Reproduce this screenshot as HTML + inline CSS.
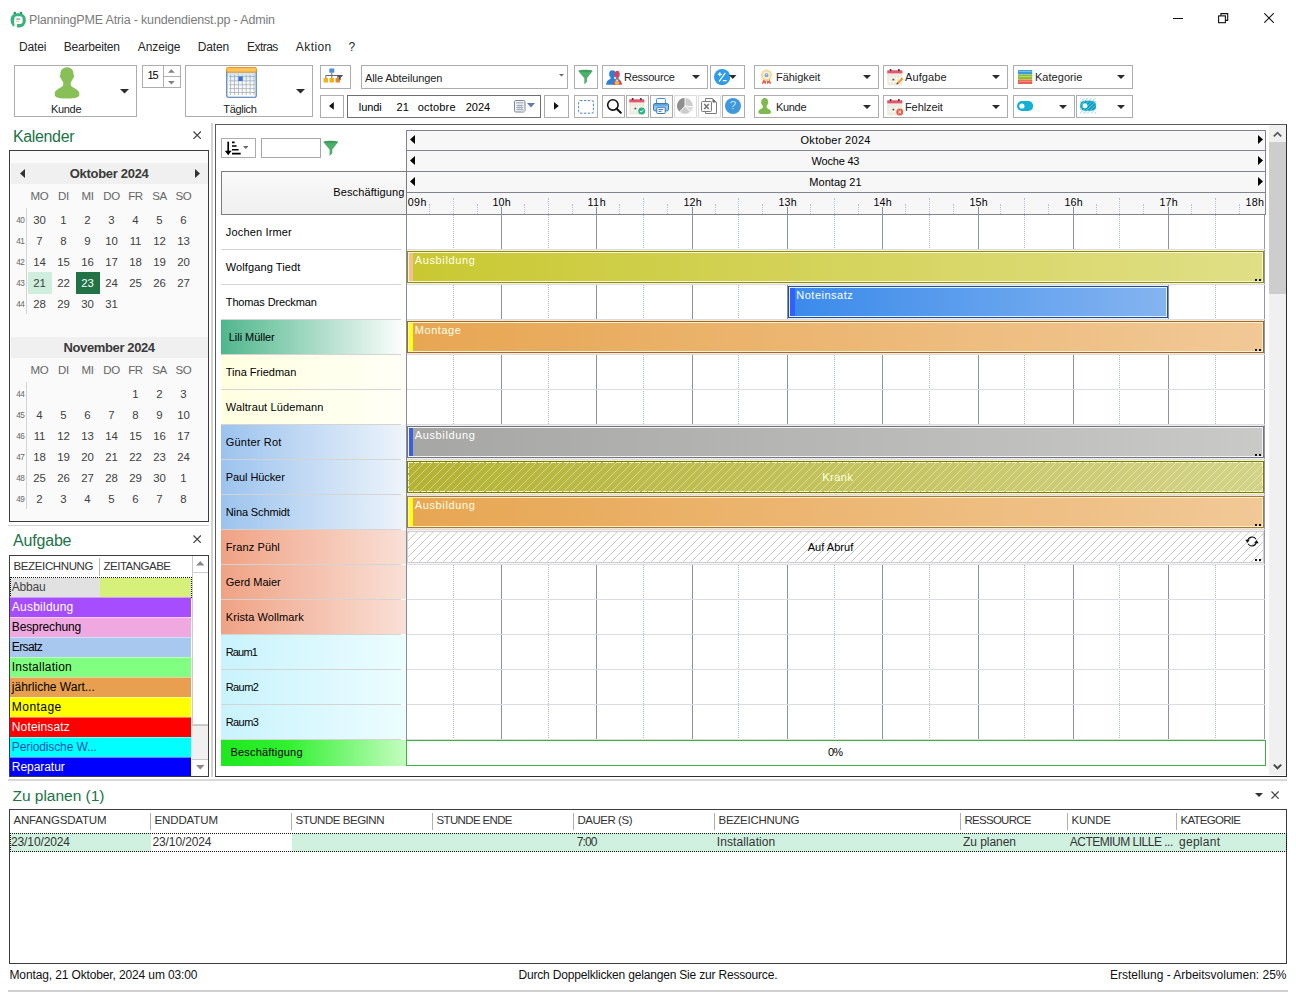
<!DOCTYPE html>
<html lang="de"><head><meta charset="utf-8"><title>PlanningPME Atria - kundendienst.pp - Admin</title>
<style>
html,body{margin:0;padding:0;background:#fff;}
body{width:1296px;height:992px;position:relative;overflow:hidden;font-family:"Liberation Sans",sans-serif;}
.a{position:absolute;box-sizing:border-box;display:block;}
.t{position:absolute;white-space:nowrap;font-family:"Liberation Sans",sans-serif;}
.b{border:1px solid #adadad;background:#fff;}

</style></head><body>
<svg class="a" style="left:10px;top:10.5px;" width="17" height="17" viewBox="0 0 17 17"><rect x="3.600" y="0.700" width="2.400" height="3" rx="1" fill="#2c8f63"/><rect x="9.800" y="0.700" width="2.400" height="3" rx="1" fill="#2c8f63"/>
<rect x="0.600" y="2.200" width="15.200" height="14.200" rx="6.300" fill="#39b37d"/>
<rect x="4.300" y="5.300" width="8.300" height="7.600" rx="2.600" fill="#fff"/><rect x="4.300" y="9" width="2.700" height="8" fill="#fff"/>
<rect x="6.200" y="7.600" width="4" height="1" fill="#3f7fb0"/><rect x="6.200" y="9.900" width="3" height="1" fill="#f2c04a"/></svg>
<span class="t" id="t1" style="top:12.47px;font-size:12.5px;line-height:16px;color:#7b7b7b;letter-spacing:-0.165px;left:29.0px;">PlanningPME Atria - kundendienst.pp - Admin</span>
<div class="a " style="left:1173px;top:17.7px;width:10px;height:1px;background:#111;"></div>
<svg class="a" style="left:1218px;top:12.7px;overflow:visible;" width="10.5" height="10.5" viewBox="0 0 10.5 10.5"><path d="M2.900 2.900V0.600H9.700V7.400H7.400" fill="none" stroke="#111" stroke-width="1.100"/><rect x="0.600" y="2.900" width="6.800" height="6.800" fill="none" stroke="#111" stroke-width="1.100"/></svg>
<svg class="a" style="left:1264px;top:13px;" width="10" height="10" viewBox="0 0 10 10"><path d="M0.300 0.300L9.700 9.700M9.700 0.300L0.300 9.700" stroke="#111" stroke-width="1.100" fill="none"/></svg>
<span class="t" id="t2" style="top:38.64px;font-size:12px;line-height:16px;color:#262626;letter-spacing:-0.179px;left:19.0px;">Datei</span>
<span class="t" id="t3" style="top:38.64px;font-size:12px;line-height:16px;color:#262626;letter-spacing:-0.205px;left:63.8px;">Bearbeiten</span>
<span class="t" id="t4" style="top:38.64px;font-size:12px;line-height:16px;color:#262626;letter-spacing:-0.112px;left:137.8px;">Anzeige</span>
<span class="t" id="t5" style="top:38.64px;font-size:12px;line-height:16px;color:#262626;letter-spacing:-0.133px;left:197.8px;">Daten</span>
<span class="t" id="t6" style="top:38.64px;font-size:12px;line-height:16px;color:#262626;letter-spacing:-0.543px;left:247.0px;">Extras</span>
<span class="t" id="t7" style="top:38.64px;font-size:12px;line-height:16px;color:#262626;letter-spacing:0.428px;left:295.8px;">Aktion</span>
<span class="t" id="t8" style="top:38.64px;font-size:12px;line-height:16px;color:#262626;left:348.5px;">?</span>
<div class="a " style="left:14px;top:65px;width:123px;height:52px;border:1px solid #adadad;background:#fff;"></div>
<svg class="a" style="left:54px;top:67px;" width="26" height="32" viewBox="0 0 26 32"><path d="M13 0.200C17.200 0.200 19.600 3.300 19.600 7.400C19.600 8.200 20.300 8.300 20.300 9.300C20.300 10.400 19.400 10.600 19.200 11C18.300 14 16.300 16 13 16C9.700 16 7.700 14 6.800 11C6.600 10.600 5.700 10.400 5.700 9.300C5.700 8.300 6.400 8.200 6.400 7.400C6.400 3.300 8.800 0.200 13 0.200Z" fill="#88c057"/>
<path d="M9.200 12V17.800C9.200 20.800 1.600 21.300 0.700 26.300C0 30.600 4 31.500 13 31.500C22 31.500 26 30.600 25.300 26.300C24.400 21.300 16.800 20.800 16.800 17.800V12Z" fill="#88c057"/></svg>
<span class="t" id="t9" style="top:101.89px;font-size:11px;line-height:14px;color:#222;letter-spacing:-0.328px;left:51.0px;">Kunde</span>
<svg class="a" style="left:120.0px;top:89.25px;" width="9" height="4.5" viewBox="0 0 9 4.5"><path d="M0 0H9L4.5 4.5Z" fill="#2b2b2b"/></svg>
<div class="a " style="left:142px;top:65px;width:39px;height:23px;border:1px solid #adadad;background:#fff;"></div>
<div class="a " style="left:163px;top:66px;width:1.2px;height:21px;background:#b0b0b0;"></div>
<div class="a " style="left:164px;top:75.8px;width:16px;height:1.2px;background:#b0b0b0;"></div>
<span class="t" id="t10" style="top:68.19px;font-size:11px;line-height:14px;color:#000;letter-spacing:-0.900px;left:147.4px;">15</span>
<svg class="a" style="left:168.2px;top:69px;" width="7" height="4" viewBox="0 0 7 4"><path d="M0 3.700H6.800L3.400 0.200Z" fill="#808080"/></svg>
<svg class="a" style="left:168.2px;top:80.7px;" width="7" height="4" viewBox="0 0 7 4"><path d="M0 0H6.800L3.400 3.500Z" fill="#808080"/></svg>
<div class="a " style="left:185px;top:65px;width:128px;height:52px;border:1px solid #adadad;background:#fff;"></div>
<svg class="a" style="left:225.5px;top:66.5px;" width="31" height="31" viewBox="0 0 31 31"><defs><linearGradient id="cg" x1="0" y1="0" x2="0" y2="1"><stop offset="0" stop-color="#bfe2fb"/><stop offset="0.450" stop-color="#f4faff"/><stop offset="1" stop-color="#ffffff"/></linearGradient></defs>
<rect x="0.800" y="3" width="29.400" height="27.200" rx="1.200" fill="url(#cg)" stroke="#3f73ad" stroke-width="1.100"/>
<rect x="0.600" y="0.600" width="29.800" height="4.600" rx="1.200" fill="#fcc45e" stroke="#e8901c" stroke-width="1"/>
<path d="M4.600 7.500V28M8.500 7.500V28M12.400 7.500V28M16.300 7.500V28M20.200 7.500V28M24.100 7.500V28M28 7.500V28M3 9.500H29M3 13.800H29M3 17.700H29M3 21.600H29M3 25.500H29" stroke="#a9adb3" stroke-width="0.800" fill="none"/>
<rect x="12.400" y="9.500" width="4.300" height="4.500" fill="#3a74d0"/></svg>
<span class="t" id="t11" style="top:101.89px;font-size:11px;line-height:14px;color:#222;letter-spacing:-0.328px;left:223.3px;">Täglich</span>
<svg class="a" style="left:296.0px;top:89.25px;" width="9" height="4.5" viewBox="0 0 9 4.5"><path d="M0 0H9L4.5 4.5Z" fill="#2b2b2b"/></svg>
<div class="a " style="left:320px;top:65px;width:31px;height:24px;border:1px solid #adadad;background:#fff;"></div>
<svg class="a" style="left:323px;top:68px;" width="22" height="17" viewBox="0 0 22 17"><rect x="6.300" y="0.500" width="5" height="4.200" fill="#4a90d9"/>
<path d="M8.800 4.700V7.500M2.800 10V7.500H14.800V10M8.800 7.500V10" stroke="#666" stroke-width="1" fill="none"/>
<rect x="0.500" y="10" width="4.500" height="4.500" fill="#f2b01e"/><rect x="6.500" y="10" width="4.500" height="4.500" fill="#f2b01e"/><rect x="12.500" y="10" width="4.500" height="4.500" fill="#e8862a"/>
<path d="M13.300 7H20.300L17.700 9.800V12.300L15.900 11.200V9.800Z" fill="#555"/></svg>
<div class="a " style="left:361px;top:65px;width:207px;height:24px;border:1px solid #adadad;background:#fff;"></div>
<span class="t" id="t12" style="top:71.19px;font-size:11px;line-height:14px;color:#222;letter-spacing:-0.094px;left:365.0px;">Alle Abteilungen</span>
<svg class="a" style="left:558.8px;top:74.3px;" width="5" height="2.6" viewBox="0 0 5 2.6"><path d="M0 0H5L2.5 2.6Z" fill="#666"/></svg>
<div class="a " style="left:574px;top:65px;width:24px;height:24px;border:1px solid #adadad;background:#fff;"></div>
<svg class="a" style="left:578.3px;top:69px;" width="14.96" height="15.84" viewBox="0 0 17 18"><path d="M0.300 2.200C0.300 0.300 16.700 0.300 16.700 2.200L10.200 10.500V14.500L7.200 17.500V10.500Z" fill="#4daf6b"/><ellipse cx="8.500" cy="2.300" rx="7" ry="1.300" fill="#3f9c5c"/></svg>
<div class="a " style="left:602px;top:65px;width:106px;height:24px;border:1px solid #adadad;background:#fff;"></div>
<svg class="a" style="left:606px;top:69.5px;" width="17" height="15" viewBox="0 0 17 15"><ellipse cx="6.400" cy="4" rx="3.300" ry="3.800" fill="#2f80d2"/><path d="M0.200 14.800C0.200 10.500 3 9.800 4.600 8.800V7H8.200V8.800C9.800 9.800 12.600 10.500 12.600 14.800Z" fill="#2f80d2"/>
<ellipse cx="11.200" cy="4.300" rx="2.500" ry="3.500" fill="#d9405a"/><path d="M7.500 14.800C7.500 11 8.800 9.800 9.800 8.800V7.200H12.600V8.800C13.600 9.800 16 11 16 14.800Z" fill="#d9405a"/>
<circle cx="11" cy="10.800" r="2.200" fill="#3fa6a0"/><path d="M8.800 11.500H13.200V13.500C13.200 14.300 12.500 14.800 11 14.800C9.500 14.800 8.800 14.300 8.800 13.500Z" fill="#f2b84a"/><circle cx="11" cy="10.600" r="1" fill="#e9ded0"/></svg>
<span class="t" id="t13" style="top:70.09px;font-size:11px;line-height:14px;color:#222;letter-spacing:-0.222px;left:624.0px;">Ressource</span>
<svg class="a" style="left:692.3px;top:75.3px;" width="8" height="4" viewBox="0 0 8 4"><path d="M0 0H8L4.0 4Z" fill="#2b2b2b"/></svg>
<div class="a " style="left:710px;top:65px;width:35px;height:24px;border:1px solid #adadad;background:#fff;"></div>
<svg class="a" style="left:713.8px;top:68.7px;" width="16.2" height="16.2" viewBox="0 0 16.200 16.200"><circle cx="8.100" cy="8.100" r="8.100" fill="#2d9be8"/><path d="M3.800 5.300H7.800M5.800 3.300V7.300M11.300 3.800L5 12.600M8.800 11.600H12.600" stroke="#fff" stroke-width="1.200" fill="none"/></svg>
<svg class="a" style="left:729.45px;top:75.4px;" width="7.5" height="4" viewBox="0 0 7.5 4"><path d="M0 0H7.5L3.75 4Z" fill="#2b2b2b"/></svg>
<div class="a " style="left:754px;top:65px;width:125px;height:24px;border:1px solid #adadad;background:#fff;"></div>
<span class="t" id="t14" style="top:70.09px;font-size:11px;line-height:14px;color:#222;letter-spacing:-0.043px;left:776.0px;">Fähigkeit</span>
<svg class="a" style="left:862.8px;top:75.3px;" width="8" height="4" viewBox="0 0 8 4"><path d="M0 0H8L4.0 4Z" fill="#2b2b2b"/></svg>
<svg class="a" style="left:759.5px;top:69px;" width="13" height="16" viewBox="0 0 13 16"><path d="M3.600 9.500L1.800 15.200 4.300 14 5.600 15.600 6.500 10.500Z" fill="#e8604a"/><path d="M9.400 9.500L11.200 15.200 8.700 14 7.400 15.600 6.500 10.500Z" fill="#e8604a"/>
<circle cx="6.500" cy="6.200" r="5.400" fill="#f3d080" stroke="#f7e2a8" stroke-width="1.200" stroke-dasharray="1.700 1.100"/><circle cx="6.500" cy="6.200" r="4" fill="#f1ede1"/><circle cx="6.500" cy="6.200" r="1.900" fill="#7f9fc4"/><circle cx="6.500" cy="5.800" r="0.700" fill="#dfe8f2"/></svg>
<div class="a " style="left:883px;top:65px;width:125px;height:24px;border:1px solid #adadad;background:#fff;"></div>
<span class="t" id="t15" style="top:70.09px;font-size:11px;line-height:14px;color:#222;letter-spacing:0.086px;left:905.0px;">Aufgabe</span>
<svg class="a" style="left:991.8px;top:75.3px;" width="8" height="4" viewBox="0 0 8 4"><path d="M0 0H8L4.0 4Z" fill="#2b2b2b"/></svg>
<svg class="a" style="left:887px;top:68.8px;overflow:visible;" width="17" height="17" viewBox="0 0 17 17"><rect x="0.300" y="1.800" width="15" height="14.600" fill="#ece9dd"/>
<rect x="0.300" y="1.300" width="15" height="3.300" fill="#e0566a"/><rect x="0.300" y="4.600" width="15" height="1.200" fill="#f7e9e4"/>
<circle cx="3.600" cy="1.100" r="1" fill="#2b2b33"/><circle cx="11.900" cy="1.100" r="1" fill="#2b2b33"/>
<path d="M3 7V15.500M6.200 7V15.500M9.400 7V15.500M12.600 7V15.500M1.500 9.300H14M1.500 12.400H14" stroke="#faf8f1" stroke-width="0.900" fill="none"/><rect x="5.500" y="9.700" width="1.700" height="1.700" fill="#55504a"/><path d="M9.300 15.600L10.200 13.200 14.800 8.600 16.300 10.100 11.700 14.700Z" fill="#eea030"/><path d="M9.300 15.600L10.200 13.200 11.700 14.700Z" fill="#5a4630"/><path d="M14.200 9.200L15.700 10.700" stroke="#d98a20" stroke-width="0.800"/></svg>
<div class="a " style="left:1013px;top:65px;width:120px;height:24px;border:1px solid #adadad;background:#fff;"></div>
<span class="t" id="t16" style="top:70.09px;font-size:11px;line-height:14px;color:#222;letter-spacing:0.026px;left:1035.0px;">Kategorie</span>
<svg class="a" style="left:1116.8px;top:75.3px;" width="8" height="4" viewBox="0 0 8 4"><path d="M0 0H8L4.0 4Z" fill="#2b2b2b"/></svg>
<svg class="a" style="left:1018px;top:69.8px;" width="15" height="15" viewBox="0 0 15 15"><rect x="0" y="0" width="14.200" height="4.400" rx="0.500" fill="#3b9ad9"/><rect x="0.800" y="1.200" width="12.600" height="0.800" fill="#8cc8ee"/><rect x="0" y="4.800" width="14.200" height="4.400" rx="0.500" fill="#8cc11f"/><rect x="0.800" y="6" width="12.600" height="0.800" fill="#c4e27a"/><rect x="0" y="9.600" width="14.200" height="4.500" rx="0.500" fill="#e8604a"/><rect x="0.800" y="10.800" width="12.600" height="0.800" fill="#f4a89a"/></svg>
<div class="a " style="left:320px;top:95px;width:24px;height:23px;border:1px solid #adadad;background:#fff;"></div>
<svg class="a" style="left:328.90000000000003px;top:102.0px;" width="4.8" height="7.8" viewBox="0 0 4.8 7.8"><path d="M4.8 0V7.8L0 3.9Z" fill="#111"/></svg>
<div class="a " style="left:347px;top:95px;width:194px;height:23px;border:1px solid #6f6f6f;background:#fff;"></div>
<span class="t" id="t17" style="top:100.19px;font-size:11px;line-height:14px;color:#000;letter-spacing:-0.062px;left:358.8px;">lundi</span>
<span class="t" id="t18" style="top:100.19px;font-size:11px;line-height:14px;color:#000;letter-spacing:0.050px;left:396.5px;">21</span>
<span class="t" id="t19" style="top:100.19px;font-size:11px;line-height:14px;color:#000;letter-spacing:0.183px;left:417.8px;">octobre</span>
<span class="t" id="t20" style="top:100.19px;font-size:11px;line-height:14px;color:#000;letter-spacing:-0.061px;left:465.8px;">2024</span>
<svg class="a" style="left:514px;top:100px;overflow:visible;" width="12" height="13" viewBox="0 0 12 13"><rect x="0.500" y="0.500" width="10.500" height="11.500" rx="1.300" fill="#f1f3f6" stroke="#7d8592" stroke-width="1"/><rect x="2" y="2" width="7.500" height="1.500" fill="#b4bbc6"/><path d="M2.200 5.500H9.300M2.200 7.500H9.300M2.200 9.500H9.300M4.100 4.500V10.500M5.900 4.500V10.500M7.700 4.500V10.500" stroke="#9aa2b0" stroke-width="0.700"/><path d="M7 12L11 8V12Z" fill="#c9ced6"/></svg>
<svg class="a" style="left:526.5px;top:103.05px;" width="8" height="4.5" viewBox="0 0 8 4.5"><path d="M0 0H8L4.0 4.5Z" fill="#5a7cae"/></svg>
<div class="a " style="left:544px;top:95px;width:25px;height:23px;border:1px solid #adadad;background:#fff;"></div>
<svg class="a" style="left:553.9px;top:102.0px;" width="4.8" height="7.8" viewBox="0 0 4.8 7.8"><path d="M0 0V7.8L4.8 3.9Z" fill="#111"/></svg>
<div class="a " style="left:574px;top:95px;width:24px;height:23px;border:1px solid #adadad;background:#fff;"></div>
<svg class="a" style="left:578px;top:99.5px;" width="16" height="14" viewBox="0 0 16 14"><rect x="0.600" y="0.600" width="14.800" height="12.600" rx="1.500" fill="none" stroke="#4f86cc" stroke-width="1" stroke-dasharray="2.400 1.500"/></svg>
<div class="a " style="left:602px;top:95px;width:23px;height:23px;border:1px solid #adadad;background:#fff;"></div>
<svg class="a" style="left:605.5px;top:98.3px;" width="16" height="16" viewBox="0 0 16 16"><circle cx="6.900" cy="6.900" r="5.200" fill="none" stroke="#111" stroke-width="1.600"/><path d="M10.700 10.700L14.800 14.800" stroke="#111" stroke-width="2" stroke-linecap="round"/></svg>
<div class="a " style="left:626px;top:95px;width:23px;height:23px;border:1px solid #adadad;background:#fff;"></div>
<svg class="a" style="left:629px;top:97.6px;overflow:visible;" width="17" height="17" viewBox="0 0 17 17"><rect x="0.300" y="1.800" width="15" height="14.600" fill="#ece9dd"/>
<rect x="0.300" y="1.300" width="15" height="3.300" fill="#e0566a"/><rect x="0.300" y="4.600" width="15" height="1.200" fill="#f7e9e4"/>
<circle cx="3.600" cy="1.100" r="1" fill="#2b2b33"/><circle cx="11.900" cy="1.100" r="1" fill="#2b2b33"/>
<path d="M3 7V15.500M6.200 7V15.500M9.400 7V15.500M12.600 7V15.500M1.500 9.300H14M1.500 12.400H14" stroke="#faf8f1" stroke-width="0.900" fill="none"/><rect x="5.500" y="9.700" width="1.700" height="1.700" fill="#55504a"/><circle cx="12.700" cy="12.900" r="3.500" fill="#27b48a"/><path d="M11 12.900L12.300 14.200 14.500 11.700" stroke="#fff" stroke-width="1" fill="none"/></svg>
<div class="a " style="left:650px;top:95px;width:23px;height:23px;border:1px solid #adadad;background:#fff;"></div>
<svg class="a" style="left:653px;top:98px;" width="16" height="16" viewBox="0 0 16 16"><rect x="3.600" y="0.500" width="8.800" height="6" rx="0.800" fill="#fff" stroke="#4b8bc9" stroke-width="1"/>
<rect x="0.500" y="5.500" width="15" height="7.400" rx="1.600" fill="#8dc9f1" stroke="#3b79b9" stroke-width="1"/><rect x="1" y="6" width="14" height="1.800" fill="#5fa3dc"/>
<rect x="3.800" y="9.300" width="8.400" height="6.200" rx="0.600" fill="#fff" stroke="#3b79b9" stroke-width="1"/><path d="M5.500 11.400H10.300M5.500 13.300H8.600" stroke="#2d5f9a" stroke-width="0.900"/></svg>
<div class="a " style="left:674px;top:95px;width:23px;height:23px;border:1px solid #dcdcdc;background:#fff;"></div>
<svg class="a" style="left:677px;top:98px;" width="16" height="16" viewBox="0 0 16 16"><circle cx="8" cy="8" r="7.900" fill="#cdcdcd"/><path d="M8 8V0.100A7.900 7.900 0 0 0 2.600 13.800Z" fill="#8f8f8f"/><path d="M8 8L15.900 8.600A7.900 7.900 0 0 1 13.400 13.800Z" fill="#dcdcdc"/><path d="M8 8V0M8 8L13.600 14M8 8L2.400 14M8 8L16 8.600" stroke="#fff" stroke-width="0.900"/></svg>
<div class="a " style="left:698px;top:95px;width:23px;height:23px;border:1px solid #dcdcdc;background:#fff;"></div>
<svg class="a" style="left:701px;top:98px;" width="16" height="16" viewBox="0 0 16 16"><path d="M4.500 0.500H11.500L15.500 4.500V15.500H4.500Z" fill="#fff" stroke="#7d7d7d" stroke-width="1"/><path d="M11.500 0.500V4.500H15.500Z" fill="#6a6a6a"/><rect x="0.500" y="3.500" width="10" height="10" rx="0.800" fill="#f7f7f7" stroke="#7d7d7d" stroke-width="1"/><path d="M3.300 6L7.700 11M7.700 6L3.300 11" stroke="#6f6f6f" stroke-width="1.300"/></svg>
<div class="a " style="left:722px;top:95px;width:23px;height:23px;border:1px solid #adadad;background:#fff;"></div>
<svg class="a" style="left:724.9px;top:97.7px;" width="16" height="16" viewBox="0 0 16 16"><circle cx="8" cy="8" r="8" fill="#3f98dc"/></svg>
<div class="t" style="top:98.32px;font-size:11.5px;line-height:15px;color:#cfe6f8;left:433.00px;width:600px;text-align:center;"><span id="t21">?</span></div>
<div class="a " style="left:754px;top:95px;width:125px;height:23px;border:1px solid #adadad;background:#fff;"></div>
<span class="t" id="t22" style="top:100.09px;font-size:11px;line-height:14px;color:#222;letter-spacing:-0.328px;left:776.0px;">Kunde</span>
<svg class="a" style="left:862.8px;top:104.8px;" width="8" height="4" viewBox="0 0 8 4"><path d="M0 0H8L4.0 4Z" fill="#2b2b2b"/></svg>
<svg class="a" style="left:757.8px;top:97.8px;" width="13.4" height="16.5" viewBox="0 0 26 32"><path d="M13 0.200C17.200 0.200 19.600 3.300 19.600 7.400C19.600 8.200 20.300 8.300 20.300 9.300C20.300 10.400 19.400 10.600 19.200 11C18.300 14 16.300 16 13 16C9.700 16 7.700 14 6.800 11C6.600 10.600 5.700 10.400 5.700 9.300C5.700 8.300 6.400 8.200 6.400 7.400C6.400 3.300 8.800 0.200 13 0.200Z" fill="#7fba4e"/>
<path d="M9.200 12V17.800C9.200 20.800 1.600 21.300 0.700 26.300C0 30.600 4 31.500 13 31.500C22 31.500 26 30.600 25.300 26.300C24.400 21.300 16.800 20.800 16.800 17.800V12Z" fill="#7fba4e"/></svg>
<div class="a " style="left:883px;top:95px;width:125px;height:23px;border:1px solid #adadad;background:#fff;"></div>
<span class="t" id="t23" style="top:100.09px;font-size:11px;line-height:14px;color:#222;letter-spacing:-0.104px;left:905.0px;">Fehlzeit</span>
<svg class="a" style="left:991.8px;top:104.8px;" width="8" height="4" viewBox="0 0 8 4"><path d="M0 0H8L4.0 4Z" fill="#2b2b2b"/></svg>
<svg class="a" style="left:887px;top:98.8px;overflow:visible;" width="17" height="17" viewBox="0 0 17 17"><rect x="0.300" y="1.800" width="15" height="14.600" fill="#ece9dd"/>
<rect x="0.300" y="1.300" width="15" height="3.300" fill="#e0566a"/><rect x="0.300" y="4.600" width="15" height="1.200" fill="#f7e9e4"/>
<circle cx="3.600" cy="1.100" r="1" fill="#2b2b33"/><circle cx="11.900" cy="1.100" r="1" fill="#2b2b33"/>
<path d="M3 7V15.500M6.200 7V15.500M9.400 7V15.500M12.600 7V15.500M1.500 9.300H14M1.500 12.400H14" stroke="#faf8f1" stroke-width="0.900" fill="none"/><rect x="5.500" y="9.700" width="1.700" height="1.700" fill="#55504a"/><circle cx="12.700" cy="12.900" r="3.500" fill="#e8604e"/><path d="M11.400 11.600L14 14.200M14 11.600L11.400 14.200" stroke="#fff" stroke-width="1"/></svg>
<div class="a " style="left:1013px;top:95px;width:62px;height:23px;border:1px solid #adadad;background:#fff;"></div>
<svg class="a" style="left:1059.0px;top:104.8px;" width="8" height="4" viewBox="0 0 8 4"><path d="M0 0H8L4.0 4Z" fill="#2b2b2b"/></svg>
<svg class="a" style="left:1017px;top:100.9px;" width="16.5" height="10" viewBox="0 0 16.5 10"><rect x="0" y="0" width="16.200" height="10" rx="5" fill="#12b0d4"/><circle cx="4.900" cy="5" r="2.600" fill="#fff"/></svg>
<div class="a " style="left:1076px;top:95px;width:57px;height:23px;border:1px solid #adadad;background:#fff;"></div>
<svg class="a" style="left:1116.8px;top:104.8px;" width="8" height="4" viewBox="0 0 8 4"><path d="M0 0H8L4.0 4Z" fill="#2b2b2b"/></svg>
<svg class="a" style="left:1079.8px;top:98.2px;" width="16.5" height="15.5" viewBox="0 0 16.5 15.5"><defs><pattern id="hx" width="2.600" height="2.600" patternUnits="userSpaceOnUse" patternTransform="rotate(45)"><rect width="1" height="2.600" fill="#a9dcea"/></pattern>
<pattern id="hy" width="2.600" height="2.600" patternUnits="userSpaceOnUse" patternTransform="rotate(45)"><rect width="0.800" height="2.600" fill="#5cc8e2"/></pattern></defs>
<rect x="0" y="0" width="16.200" height="15.500" fill="url(#hx)"/><rect x="0" y="2.700" width="16.200" height="10" rx="5" fill="#0b9dbd"/><rect x="0" y="2.700" width="16.200" height="10" rx="5" fill="url(#hy)"/><circle cx="5" cy="7.700" r="2.500" fill="#e8f7fb"/></svg>
<span class="t" id="t24" style="top:125.96px;font-size:16px;line-height:21px;color:#217346;letter-spacing:-0.364px;left:13.0px;">Kalender</span>
<svg class="a" style="left:192.9px;top:131.10000000000002px;" width="8.4" height="8.4" viewBox="0 0 8.4 8.4"><path d="M0.500 0.500L7.9 7.9M7.9 0.500L0.500 7.9" stroke="#444" stroke-width="1.2" fill="none"/></svg>
<div class="a " style="left:9px;top:150px;width:199.5px;height:371.5px;border:1px solid #3c3c3c;border-width:1.5px 1px 1.5px 1.5px;background:#fafafa;"></div>
<div class="a " style="left:11px;top:163px;width:196.5px;height:21px;background:#f0f0f0;"></div>
<div class="t" style="top:165.00px;font-size:13px;line-height:17px;color:#3a3a3a;font-weight:700;letter-spacing:-0.307px;left:-190.85px;width:600px;text-align:center;"><span id="t25">Oktober 2024</span></div>
<svg class="a" style="left:19.5px;top:169.0px;" width="5" height="9" viewBox="0 0 5 9"><path d="M5 0V9L0 4.5Z" fill="#333"/></svg>
<svg class="a" style="left:194.5px;top:169.0px;" width="5" height="9" viewBox="0 0 5 9"><path d="M0 0V9L5 4.5Z" fill="#333"/></svg>
<div class="t" style="top:188.52px;font-size:11.5px;line-height:15px;color:#666;left:-260.50px;width:600px;text-align:center;letter-spacing:-0.300px;"><span id="t26">MO</span></div>
<div class="t" style="top:188.52px;font-size:11.5px;line-height:15px;color:#666;left:-236.50px;width:600px;text-align:center;letter-spacing:-0.300px;"><span id="t27">DI</span></div>
<div class="t" style="top:188.52px;font-size:11.5px;line-height:15px;color:#666;left:-212.50px;width:600px;text-align:center;letter-spacing:-0.300px;"><span id="t28">MI</span></div>
<div class="t" style="top:188.52px;font-size:11.5px;line-height:15px;color:#666;left:-188.50px;width:600px;text-align:center;letter-spacing:-0.300px;"><span id="t29">DO</span></div>
<div class="t" style="top:188.52px;font-size:11.5px;line-height:15px;color:#666;left:-164.50px;width:600px;text-align:center;letter-spacing:-0.300px;"><span id="t30">FR</span></div>
<div class="t" style="top:188.52px;font-size:11.5px;line-height:15px;color:#666;left:-140.50px;width:600px;text-align:center;letter-spacing:-0.300px;"><span id="t31">SA</span></div>
<div class="t" style="top:188.52px;font-size:11.5px;line-height:15px;color:#666;left:-116.50px;width:600px;text-align:center;letter-spacing:-0.300px;"><span id="t32">SO</span></div>
<div class="a " style="left:26px;top:207.5px;width:1px;height:106px;background:#d4d4d4;"></div>
<div class="t" style="top:214.56px;font-size:8.2px;line-height:11px;color:#666;left:-279.80px;width:600px;text-align:center;letter-spacing:-0.700px;"><span id="t33">40</span></div>
<div class="t" style="top:212.65px;font-size:11.4px;line-height:15px;color:#404040;left:-260.60px;width:600px;text-align:center;letter-spacing:-0.250px;"><span id="t34">30</span></div>
<div class="t" style="top:212.65px;font-size:11.4px;line-height:15px;color:#404040;left:-236.60px;width:600px;text-align:center;letter-spacing:-0.250px;"><span id="t35">1</span></div>
<div class="t" style="top:212.65px;font-size:11.4px;line-height:15px;color:#404040;left:-212.60px;width:600px;text-align:center;letter-spacing:-0.250px;"><span id="t36">2</span></div>
<div class="t" style="top:212.65px;font-size:11.4px;line-height:15px;color:#404040;left:-188.60px;width:600px;text-align:center;letter-spacing:-0.250px;"><span id="t37">3</span></div>
<div class="t" style="top:212.65px;font-size:11.4px;line-height:15px;color:#404040;left:-164.60px;width:600px;text-align:center;letter-spacing:-0.250px;"><span id="t38">4</span></div>
<div class="t" style="top:212.65px;font-size:11.4px;line-height:15px;color:#404040;left:-140.60px;width:600px;text-align:center;letter-spacing:-0.250px;"><span id="t39">5</span></div>
<div class="t" style="top:212.65px;font-size:11.4px;line-height:15px;color:#404040;left:-116.60px;width:600px;text-align:center;letter-spacing:-0.250px;"><span id="t40">6</span></div>
<div class="t" style="top:235.56px;font-size:8.2px;line-height:11px;color:#666;left:-279.80px;width:600px;text-align:center;letter-spacing:-0.700px;"><span id="t41">41</span></div>
<div class="t" style="top:233.65px;font-size:11.4px;line-height:15px;color:#404040;left:-260.60px;width:600px;text-align:center;letter-spacing:-0.250px;"><span id="t42">7</span></div>
<div class="t" style="top:233.65px;font-size:11.4px;line-height:15px;color:#404040;left:-236.60px;width:600px;text-align:center;letter-spacing:-0.250px;"><span id="t43">8</span></div>
<div class="t" style="top:233.65px;font-size:11.4px;line-height:15px;color:#404040;left:-212.60px;width:600px;text-align:center;letter-spacing:-0.250px;"><span id="t44">9</span></div>
<div class="t" style="top:233.65px;font-size:11.4px;line-height:15px;color:#404040;left:-188.60px;width:600px;text-align:center;letter-spacing:-0.250px;"><span id="t45">10</span></div>
<div class="t" style="top:233.65px;font-size:11.4px;line-height:15px;color:#404040;left:-164.60px;width:600px;text-align:center;letter-spacing:-0.250px;"><span id="t46">11</span></div>
<div class="t" style="top:233.65px;font-size:11.4px;line-height:15px;color:#404040;left:-140.60px;width:600px;text-align:center;letter-spacing:-0.250px;"><span id="t47">12</span></div>
<div class="t" style="top:233.65px;font-size:11.4px;line-height:15px;color:#404040;left:-116.60px;width:600px;text-align:center;letter-spacing:-0.250px;"><span id="t48">13</span></div>
<div class="t" style="top:256.56px;font-size:8.2px;line-height:11px;color:#666;left:-279.80px;width:600px;text-align:center;letter-spacing:-0.700px;"><span id="t49">42</span></div>
<div class="t" style="top:254.65px;font-size:11.4px;line-height:15px;color:#404040;left:-260.60px;width:600px;text-align:center;letter-spacing:-0.250px;"><span id="t50">14</span></div>
<div class="t" style="top:254.65px;font-size:11.4px;line-height:15px;color:#404040;left:-236.60px;width:600px;text-align:center;letter-spacing:-0.250px;"><span id="t51">15</span></div>
<div class="t" style="top:254.65px;font-size:11.4px;line-height:15px;color:#404040;left:-212.60px;width:600px;text-align:center;letter-spacing:-0.250px;"><span id="t52">16</span></div>
<div class="t" style="top:254.65px;font-size:11.4px;line-height:15px;color:#404040;left:-188.60px;width:600px;text-align:center;letter-spacing:-0.250px;"><span id="t53">17</span></div>
<div class="t" style="top:254.65px;font-size:11.4px;line-height:15px;color:#404040;left:-164.60px;width:600px;text-align:center;letter-spacing:-0.250px;"><span id="t54">18</span></div>
<div class="t" style="top:254.65px;font-size:11.4px;line-height:15px;color:#404040;left:-140.60px;width:600px;text-align:center;letter-spacing:-0.250px;"><span id="t55">19</span></div>
<div class="t" style="top:254.65px;font-size:11.4px;line-height:15px;color:#404040;left:-116.60px;width:600px;text-align:center;letter-spacing:-0.250px;"><span id="t56">20</span></div>
<div class="t" style="top:277.56px;font-size:8.2px;line-height:11px;color:#666;left:-279.80px;width:600px;text-align:center;letter-spacing:-0.700px;"><span id="t57">43</span></div>
<div class="a " style="left:28.0px;top:272px;width:24px;height:21.5px;background:#cfeedd;"></div>
<div class="t" style="top:275.65px;font-size:11.4px;line-height:15px;color:#404040;left:-260.60px;width:600px;text-align:center;letter-spacing:-0.250px;"><span id="t58">21</span></div>
<div class="t" style="top:275.65px;font-size:11.4px;line-height:15px;color:#404040;left:-236.60px;width:600px;text-align:center;letter-spacing:-0.250px;"><span id="t59">22</span></div>
<div class="a " style="left:76.0px;top:272px;width:24px;height:21.5px;background:#217346;"></div>
<div class="t" style="top:275.65px;font-size:11.4px;line-height:15px;color:#fff;left:-212.60px;width:600px;text-align:center;letter-spacing:-0.250px;"><span id="t60">23</span></div>
<div class="t" style="top:275.65px;font-size:11.4px;line-height:15px;color:#404040;left:-188.60px;width:600px;text-align:center;letter-spacing:-0.250px;"><span id="t61">24</span></div>
<div class="t" style="top:275.65px;font-size:11.4px;line-height:15px;color:#404040;left:-164.60px;width:600px;text-align:center;letter-spacing:-0.250px;"><span id="t62">25</span></div>
<div class="t" style="top:275.65px;font-size:11.4px;line-height:15px;color:#404040;left:-140.60px;width:600px;text-align:center;letter-spacing:-0.250px;"><span id="t63">26</span></div>
<div class="t" style="top:275.65px;font-size:11.4px;line-height:15px;color:#404040;left:-116.60px;width:600px;text-align:center;letter-spacing:-0.250px;"><span id="t64">27</span></div>
<div class="t" style="top:298.56px;font-size:8.2px;line-height:11px;color:#666;left:-279.80px;width:600px;text-align:center;letter-spacing:-0.700px;"><span id="t65">44</span></div>
<div class="t" style="top:296.65px;font-size:11.4px;line-height:15px;color:#404040;left:-260.60px;width:600px;text-align:center;letter-spacing:-0.250px;"><span id="t66">28</span></div>
<div class="t" style="top:296.65px;font-size:11.4px;line-height:15px;color:#404040;left:-236.60px;width:600px;text-align:center;letter-spacing:-0.250px;"><span id="t67">29</span></div>
<div class="t" style="top:296.65px;font-size:11.4px;line-height:15px;color:#404040;left:-212.60px;width:600px;text-align:center;letter-spacing:-0.250px;"><span id="t68">30</span></div>
<div class="t" style="top:296.65px;font-size:11.4px;line-height:15px;color:#404040;left:-188.60px;width:600px;text-align:center;letter-spacing:-0.250px;"><span id="t69">31</span></div>
<div class="a " style="left:11px;top:337px;width:196.5px;height:21px;background:#f0f0f0;"></div>
<div class="t" style="top:339.00px;font-size:13px;line-height:17px;color:#3a3a3a;font-weight:700;letter-spacing:-0.385px;left:-190.89px;width:600px;text-align:center;"><span id="t70">November 2024</span></div>
<div class="t" style="top:362.52px;font-size:11.5px;line-height:15px;color:#666;left:-260.50px;width:600px;text-align:center;letter-spacing:-0.300px;"><span id="t71">MO</span></div>
<div class="t" style="top:362.52px;font-size:11.5px;line-height:15px;color:#666;left:-236.50px;width:600px;text-align:center;letter-spacing:-0.300px;"><span id="t72">DI</span></div>
<div class="t" style="top:362.52px;font-size:11.5px;line-height:15px;color:#666;left:-212.50px;width:600px;text-align:center;letter-spacing:-0.300px;"><span id="t73">MI</span></div>
<div class="t" style="top:362.52px;font-size:11.5px;line-height:15px;color:#666;left:-188.50px;width:600px;text-align:center;letter-spacing:-0.300px;"><span id="t74">DO</span></div>
<div class="t" style="top:362.52px;font-size:11.5px;line-height:15px;color:#666;left:-164.50px;width:600px;text-align:center;letter-spacing:-0.300px;"><span id="t75">FR</span></div>
<div class="t" style="top:362.52px;font-size:11.5px;line-height:15px;color:#666;left:-140.50px;width:600px;text-align:center;letter-spacing:-0.300px;"><span id="t76">SA</span></div>
<div class="t" style="top:362.52px;font-size:11.5px;line-height:15px;color:#666;left:-116.50px;width:600px;text-align:center;letter-spacing:-0.300px;"><span id="t77">SO</span></div>
<div class="a " style="left:26px;top:381.5px;width:1px;height:127px;background:#d4d4d4;"></div>
<div class="t" style="top:388.56px;font-size:8.2px;line-height:11px;color:#666;left:-279.80px;width:600px;text-align:center;letter-spacing:-0.700px;"><span id="t78">44</span></div>
<div class="t" style="top:386.65px;font-size:11.4px;line-height:15px;color:#404040;left:-164.60px;width:600px;text-align:center;letter-spacing:-0.250px;"><span id="t79">1</span></div>
<div class="t" style="top:386.65px;font-size:11.4px;line-height:15px;color:#404040;left:-140.60px;width:600px;text-align:center;letter-spacing:-0.250px;"><span id="t80">2</span></div>
<div class="t" style="top:386.65px;font-size:11.4px;line-height:15px;color:#404040;left:-116.60px;width:600px;text-align:center;letter-spacing:-0.250px;"><span id="t81">3</span></div>
<div class="t" style="top:409.56px;font-size:8.2px;line-height:11px;color:#666;left:-279.80px;width:600px;text-align:center;letter-spacing:-0.700px;"><span id="t82">45</span></div>
<div class="t" style="top:407.65px;font-size:11.4px;line-height:15px;color:#404040;left:-260.60px;width:600px;text-align:center;letter-spacing:-0.250px;"><span id="t83">4</span></div>
<div class="t" style="top:407.65px;font-size:11.4px;line-height:15px;color:#404040;left:-236.60px;width:600px;text-align:center;letter-spacing:-0.250px;"><span id="t84">5</span></div>
<div class="t" style="top:407.65px;font-size:11.4px;line-height:15px;color:#404040;left:-212.60px;width:600px;text-align:center;letter-spacing:-0.250px;"><span id="t85">6</span></div>
<div class="t" style="top:407.65px;font-size:11.4px;line-height:15px;color:#404040;left:-188.60px;width:600px;text-align:center;letter-spacing:-0.250px;"><span id="t86">7</span></div>
<div class="t" style="top:407.65px;font-size:11.4px;line-height:15px;color:#404040;left:-164.60px;width:600px;text-align:center;letter-spacing:-0.250px;"><span id="t87">8</span></div>
<div class="t" style="top:407.65px;font-size:11.4px;line-height:15px;color:#404040;left:-140.60px;width:600px;text-align:center;letter-spacing:-0.250px;"><span id="t88">9</span></div>
<div class="t" style="top:407.65px;font-size:11.4px;line-height:15px;color:#404040;left:-116.60px;width:600px;text-align:center;letter-spacing:-0.250px;"><span id="t89">10</span></div>
<div class="t" style="top:430.56px;font-size:8.2px;line-height:11px;color:#666;left:-279.80px;width:600px;text-align:center;letter-spacing:-0.700px;"><span id="t90">46</span></div>
<div class="t" style="top:428.65px;font-size:11.4px;line-height:15px;color:#404040;left:-260.60px;width:600px;text-align:center;letter-spacing:-0.250px;"><span id="t91">11</span></div>
<div class="t" style="top:428.65px;font-size:11.4px;line-height:15px;color:#404040;left:-236.60px;width:600px;text-align:center;letter-spacing:-0.250px;"><span id="t92">12</span></div>
<div class="t" style="top:428.65px;font-size:11.4px;line-height:15px;color:#404040;left:-212.60px;width:600px;text-align:center;letter-spacing:-0.250px;"><span id="t93">13</span></div>
<div class="t" style="top:428.65px;font-size:11.4px;line-height:15px;color:#404040;left:-188.60px;width:600px;text-align:center;letter-spacing:-0.250px;"><span id="t94">14</span></div>
<div class="t" style="top:428.65px;font-size:11.4px;line-height:15px;color:#404040;left:-164.60px;width:600px;text-align:center;letter-spacing:-0.250px;"><span id="t95">15</span></div>
<div class="t" style="top:428.65px;font-size:11.4px;line-height:15px;color:#404040;left:-140.60px;width:600px;text-align:center;letter-spacing:-0.250px;"><span id="t96">16</span></div>
<div class="t" style="top:428.65px;font-size:11.4px;line-height:15px;color:#404040;left:-116.60px;width:600px;text-align:center;letter-spacing:-0.250px;"><span id="t97">17</span></div>
<div class="t" style="top:451.56px;font-size:8.2px;line-height:11px;color:#666;left:-279.80px;width:600px;text-align:center;letter-spacing:-0.700px;"><span id="t98">47</span></div>
<div class="t" style="top:449.65px;font-size:11.4px;line-height:15px;color:#404040;left:-260.60px;width:600px;text-align:center;letter-spacing:-0.250px;"><span id="t99">18</span></div>
<div class="t" style="top:449.65px;font-size:11.4px;line-height:15px;color:#404040;left:-236.60px;width:600px;text-align:center;letter-spacing:-0.250px;"><span id="t100">19</span></div>
<div class="t" style="top:449.65px;font-size:11.4px;line-height:15px;color:#404040;left:-212.60px;width:600px;text-align:center;letter-spacing:-0.250px;"><span id="t101">20</span></div>
<div class="t" style="top:449.65px;font-size:11.4px;line-height:15px;color:#404040;left:-188.60px;width:600px;text-align:center;letter-spacing:-0.250px;"><span id="t102">21</span></div>
<div class="t" style="top:449.65px;font-size:11.4px;line-height:15px;color:#404040;left:-164.60px;width:600px;text-align:center;letter-spacing:-0.250px;"><span id="t103">22</span></div>
<div class="t" style="top:449.65px;font-size:11.4px;line-height:15px;color:#404040;left:-140.60px;width:600px;text-align:center;letter-spacing:-0.250px;"><span id="t104">23</span></div>
<div class="t" style="top:449.65px;font-size:11.4px;line-height:15px;color:#404040;left:-116.60px;width:600px;text-align:center;letter-spacing:-0.250px;"><span id="t105">24</span></div>
<div class="t" style="top:472.56px;font-size:8.2px;line-height:11px;color:#666;left:-279.80px;width:600px;text-align:center;letter-spacing:-0.700px;"><span id="t106">48</span></div>
<div class="t" style="top:470.65px;font-size:11.4px;line-height:15px;color:#404040;left:-260.60px;width:600px;text-align:center;letter-spacing:-0.250px;"><span id="t107">25</span></div>
<div class="t" style="top:470.65px;font-size:11.4px;line-height:15px;color:#404040;left:-236.60px;width:600px;text-align:center;letter-spacing:-0.250px;"><span id="t108">26</span></div>
<div class="t" style="top:470.65px;font-size:11.4px;line-height:15px;color:#404040;left:-212.60px;width:600px;text-align:center;letter-spacing:-0.250px;"><span id="t109">27</span></div>
<div class="t" style="top:470.65px;font-size:11.4px;line-height:15px;color:#404040;left:-188.60px;width:600px;text-align:center;letter-spacing:-0.250px;"><span id="t110">28</span></div>
<div class="t" style="top:470.65px;font-size:11.4px;line-height:15px;color:#404040;left:-164.60px;width:600px;text-align:center;letter-spacing:-0.250px;"><span id="t111">29</span></div>
<div class="t" style="top:470.65px;font-size:11.4px;line-height:15px;color:#404040;left:-140.60px;width:600px;text-align:center;letter-spacing:-0.250px;"><span id="t112">30</span></div>
<div class="t" style="top:470.65px;font-size:11.4px;line-height:15px;color:#404040;left:-116.60px;width:600px;text-align:center;letter-spacing:-0.250px;"><span id="t113">1</span></div>
<div class="t" style="top:493.56px;font-size:8.2px;line-height:11px;color:#666;left:-279.80px;width:600px;text-align:center;letter-spacing:-0.700px;"><span id="t114">49</span></div>
<div class="t" style="top:491.65px;font-size:11.4px;line-height:15px;color:#404040;left:-260.60px;width:600px;text-align:center;letter-spacing:-0.250px;"><span id="t115">2</span></div>
<div class="t" style="top:491.65px;font-size:11.4px;line-height:15px;color:#404040;left:-236.60px;width:600px;text-align:center;letter-spacing:-0.250px;"><span id="t116">3</span></div>
<div class="t" style="top:491.65px;font-size:11.4px;line-height:15px;color:#404040;left:-212.60px;width:600px;text-align:center;letter-spacing:-0.250px;"><span id="t117">4</span></div>
<div class="t" style="top:491.65px;font-size:11.4px;line-height:15px;color:#404040;left:-188.60px;width:600px;text-align:center;letter-spacing:-0.250px;"><span id="t118">5</span></div>
<div class="t" style="top:491.65px;font-size:11.4px;line-height:15px;color:#404040;left:-164.60px;width:600px;text-align:center;letter-spacing:-0.250px;"><span id="t119">6</span></div>
<div class="t" style="top:491.65px;font-size:11.4px;line-height:15px;color:#404040;left:-140.60px;width:600px;text-align:center;letter-spacing:-0.250px;"><span id="t120">7</span></div>
<div class="t" style="top:491.65px;font-size:11.4px;line-height:15px;color:#404040;left:-116.60px;width:600px;text-align:center;letter-spacing:-0.250px;"><span id="t121">8</span></div>
<div class="a " style="left:8px;top:524.5px;width:201px;height:1.5px;background:#d2d2d2;"></div>
<div class="a " style="left:211px;top:123px;width:2px;height:654px;background:#d3d3d3;"></div>
<span class="t" id="t122" style="top:529.76px;font-size:16px;line-height:21px;color:#217346;letter-spacing:-0.185px;left:13.0px;">Aufgabe</span>
<svg class="a" style="left:192.9px;top:535.0999999999999px;" width="8.4" height="8.4" viewBox="0 0 8.4 8.4"><path d="M0.500 0.500L7.9 7.9M7.9 0.500L0.500 7.9" stroke="#444" stroke-width="1.2" fill="none"/></svg>
<div class="a " style="left:9px;top:554.5px;width:200px;height:222.5px;border:1.5px solid #3c3c3c;border-right-width:1px;background:#fff;"></div>
<span class="t" id="t123" style="top:558.52px;font-size:11.5px;line-height:15px;color:#333;letter-spacing:-0.370px;left:13.5px;">BEZEICHNUNG</span>
<div class="a " style="left:99px;top:558px;width:1px;height:17.5px;background:#b8b8b8;"></div>
<span class="t" id="t124" style="top:558.52px;font-size:11.5px;line-height:15px;color:#333;letter-spacing:-0.500px;left:103.5px;">ZEITANGABE</span>
<div class="a " style="left:191.5px;top:556px;width:16.5px;height:220px;background:#fff;"></div>
<div class="a " style="left:191.5px;top:556px;width:16.5px;height:16.5px;background:#fff;border:1px solid #c9c9c9;border-top:none;border-right:none;"></div>
<svg class="a" style="left:195.75px;top:561.25px;" width="8.5" height="4.5" viewBox="0 0 8.5 4.5"><path d="M0 4.5H8.5L4.25 0Z" fill="#8a8a8a"/></svg>
<div class="a " style="left:191.5px;top:572px;width:16.5px;height:153px;border:1px solid #cdcdcd;border-right:none;background:#fff;"></div>
<div class="a " style="left:191.5px;top:724.5px;width:16.5px;height:35px;background:#f0f0f0;border-top:1px solid #c9c9c9;border-bottom:1px solid #c9c9c9;"></div>
<svg class="a" style="left:195.75px;top:765.25px;" width="8.5" height="4.5" viewBox="0 0 8.5 4.5"><path d="M0 0H8.5L4.25 4.5Z" fill="#8a8a8a"/></svg>
<div class="a " style="left:10px;top:577.5px;width:89.5px;height:20px;background:#e1e1e1;"></div>
<div class="a " style="left:99.5px;top:577.5px;width:91.5px;height:20px;background:#d7f07a;"></div>
<div class="a " style="left:10px;top:577.0px;width:181.5px;height:20.5px;border:1px dotted #111;"></div>
<span class="t" id="t125" style="top:579.04px;font-size:12px;line-height:16px;color:#444;letter-spacing:-0.176px;left:11.8px;">Abbau</span>
<div class="a " style="left:10px;top:596.9px;width:181px;height:20px;background:#a64dff;border-top:1px solid rgba(255,255,255,.45);"></div>
<span class="t" id="t126" style="top:599.04px;font-size:12px;line-height:16px;color:#fff;letter-spacing:0.234px;left:11.8px;">Ausbildung</span>
<div class="a " style="left:10px;top:616.9px;width:181px;height:20px;background:#f0a8e0;border-top:1px solid rgba(255,255,255,.45);"></div>
<span class="t" id="t127" style="top:619.04px;font-size:12px;line-height:16px;color:#000;letter-spacing:-0.122px;left:11.8px;">Besprechung</span>
<div class="a " style="left:10px;top:636.9px;width:181px;height:20px;background:#a8c8f0;border-top:1px solid rgba(255,255,255,.45);"></div>
<span class="t" id="t128" style="top:639.04px;font-size:12px;line-height:16px;color:#000;letter-spacing:-0.603px;left:11.8px;">Ersatz</span>
<div class="a " style="left:10px;top:656.9px;width:181px;height:20px;background:#80ff80;border-top:1px solid rgba(255,255,255,.45);"></div>
<span class="t" id="t129" style="top:659.04px;font-size:12px;line-height:16px;color:#000;letter-spacing:0.239px;left:11.8px;">Installation</span>
<div class="a " style="left:10px;top:676.9px;width:181px;height:20px;background:#e8a050;border-top:1px solid rgba(255,255,255,.45);"></div>
<span class="t" id="t130" style="top:679.04px;font-size:12px;line-height:16px;color:#000;letter-spacing:0.005px;left:11.8px;">jährliche Wart...</span>
<div class="a " style="left:10px;top:696.9px;width:181px;height:20px;background:#ffff00;border-top:1px solid rgba(255,255,255,.45);"></div>
<span class="t" id="t131" style="top:699.04px;font-size:12px;line-height:16px;color:#000;letter-spacing:0.466px;left:11.8px;">Montage</span>
<div class="a " style="left:10px;top:716.9px;width:181px;height:20px;background:#ff0000;border-top:1px solid rgba(255,255,255,.45);"></div>
<span class="t" id="t132" style="top:719.04px;font-size:12px;line-height:16px;color:#fff;letter-spacing:0.144px;left:11.8px;">Noteinsatz</span>
<div class="a " style="left:10px;top:736.9px;width:181px;height:20px;background:#00ffff;border-top:1px solid rgba(255,255,255,.45);"></div>
<span class="t" id="t133" style="top:739.04px;font-size:12px;line-height:16px;color:#0a4fb0;letter-spacing:-0.114px;left:11.8px;">Periodische W...</span>
<div class="a " style="left:10px;top:756.9px;width:181px;height:19.1px;background:#0000ff;border-top:1px solid rgba(255,255,255,.45);"></div>
<span class="t" id="t134" style="top:759.04px;font-size:12px;line-height:16px;color:#fff;letter-spacing:-0.047px;left:11.8px;">Reparatur</span>
<div class="a " style="left:8px;top:778.5px;width:1279px;height:2px;background:#d8d8d8;"></div>
<span class="t" id="t135" style="top:785.63px;font-size:15.5px;line-height:20px;color:#217346;letter-spacing:-0.017px;left:12.5px;">Zu planen (1)</span>
<svg class="a" style="left:1254.5px;top:793.3px;" width="8" height="4" viewBox="0 0 8 4"><path d="M0 0H8L4.0 4Z" fill="#333"/></svg>
<svg class="a" style="left:1271.1000000000001px;top:790.5px;" width="8.2" height="8.2" viewBox="0 0 8.2 8.2"><path d="M0.500 0.500L7.699999999999999 7.699999999999999M7.699999999999999 0.500L0.500 7.699999999999999" stroke="#444" stroke-width="1.2" fill="none"/></svg>
<div class="a " style="left:9px;top:809px;width:1278px;height:155px;border:1.5px solid #3c3c3c;border-right-width:1px;background:#fff;"></div>
<span class="t" id="t136" style="top:813.12px;font-size:11.5px;line-height:15px;color:#333;letter-spacing:-0.182px;left:13.5px;">ANFANGSDATUM</span>
<div class="a " style="left:150.0px;top:813px;width:1px;height:16.5px;background:#b0b0b0;"></div>
<span class="t" id="t137" style="top:813.12px;font-size:11.5px;line-height:15px;color:#333;letter-spacing:-0.116px;left:154.5px;">ENDDATUM</span>
<div class="a " style="left:291.0px;top:813px;width:1px;height:16.5px;background:#b0b0b0;"></div>
<span class="t" id="t138" style="top:813.12px;font-size:11.5px;line-height:15px;color:#333;letter-spacing:-0.465px;left:295.5px;">STUNDE BEGINN</span>
<div class="a " style="left:432.0px;top:813px;width:1px;height:16.5px;background:#b0b0b0;"></div>
<span class="t" id="t139" style="top:813.12px;font-size:11.5px;line-height:15px;color:#333;letter-spacing:-0.644px;left:436.5px;">STUNDE ENDE</span>
<div class="a " style="left:573.0px;top:813px;width:1px;height:16.5px;background:#b0b0b0;"></div>
<span class="t" id="t140" style="top:813.12px;font-size:11.5px;line-height:15px;color:#333;letter-spacing:-0.473px;left:577.5px;">DAUER (S)</span>
<div class="a " style="left:714.0px;top:813px;width:1px;height:16.5px;background:#b0b0b0;"></div>
<span class="t" id="t141" style="top:813.12px;font-size:11.5px;line-height:15px;color:#333;letter-spacing:-0.270px;left:718.5px;">BEZEICHNUNG</span>
<div class="a " style="left:960.0px;top:813px;width:1px;height:16.5px;background:#b0b0b0;"></div>
<span class="t" id="t142" style="top:813.12px;font-size:11.5px;line-height:15px;color:#333;letter-spacing:-0.732px;left:964.5px;">RESSOURCE</span>
<div class="a " style="left:1067.0px;top:813px;width:1px;height:16.5px;background:#b0b0b0;"></div>
<span class="t" id="t143" style="top:813.12px;font-size:11.5px;line-height:15px;color:#333;letter-spacing:-0.191px;left:1071.5px;">KUNDE</span>
<div class="a " style="left:1176.0px;top:813px;width:1px;height:16.5px;background:#b0b0b0;"></div>
<span class="t" id="t144" style="top:813.12px;font-size:11.5px;line-height:15px;color:#333;letter-spacing:-0.719px;left:1180.5px;">KATEGORIE</span>
<div class="a " style="left:10.5px;top:832.5px;width:1275.5px;height:19.5px;background:#d0f0e0;"></div>
<div class="a " style="left:150.5px;top:833px;width:141px;height:18.5px;background:#fff;"></div>
<div class="a " style="left:10px;top:832.5px;width:1276.5px;height:19.5px;border:1px dotted #111;"></div>
<span class="t" id="t145" style="top:833.84px;font-size:12px;line-height:16px;color:#333;letter-spacing:-0.118px;left:11.0px;">23/10/2024</span>
<span class="t" id="t146" style="top:833.84px;font-size:12px;line-height:16px;color:#333;letter-spacing:-0.118px;left:152.5px;">23/10/2024</span>
<span class="t" id="t147" style="top:833.84px;font-size:12px;line-height:16px;color:#333;letter-spacing:-0.900px;left:576.8px;">7:00</span>
<span class="t" id="t148" style="top:833.84px;font-size:12px;line-height:16px;color:#333;letter-spacing:0.102px;left:716.8px;">Installation</span>
<span class="t" id="t149" style="top:833.84px;font-size:12px;line-height:16px;color:#333;letter-spacing:-0.047px;left:963.0px;">Zu planen</span>
<span class="t" id="t150" style="top:833.84px;font-size:12px;line-height:16px;color:#333;letter-spacing:-0.502px;left:1069.8px;">ACTEMIUM LILLE ...</span>
<span class="t" id="t151" style="top:833.84px;font-size:12px;line-height:16px;color:#333;letter-spacing:0.271px;left:1179.0px;">geplant</span>
<span class="t" id="t152" style="top:967.14px;font-size:12px;line-height:16px;color:#111;letter-spacing:-0.129px;left:9.5px;">Montag, 21 Oktober, 2024 um 03:00</span>
<span class="t" id="t153" style="top:967.14px;font-size:12px;line-height:16px;color:#111;letter-spacing:-0.184px;left:518.5px;">Durch Doppelklicken gelangen Sie zur Ressource.</span>
<span class="t" id="t154" style="top:967.14px;font-size:12px;line-height:16px;color:#111;letter-spacing:-0.009px;right:9.51px;">Erstellung - Arbeitsvolumen: 25%</span>
<div class="a " style="left:8px;top:989.5px;width:1280px;height:2.5px;background:#d0d0d0;"></div>
<div class="a " style="left:214.5px;top:123.5px;width:1072.5px;height:653px;border:1.5px solid #5a5a5a;border-right-color:#2e2e2e;border-bottom-color:#2e2e2e;background:#fff;"></div>
<div class="a " style="left:221px;top:138px;width:35px;height:20px;border:1px solid #adadad;background:#fff;"></div>
<svg class="a" style="left:224px;top:140.5px;" width="18" height="15" viewBox="0 0 18 15"><path d="M4.200 0.700V11.500" stroke="#000" stroke-width="1.700" fill="none"/><path d="M0.800 9.800H7.600L4.200 14.300Z" fill="#000"/><path d="M8 1.400H10.600M8 5H12.600M8 8.800H14.600M8 12.600H16.700" stroke="#000" stroke-width="1.600"/></svg>
<svg class="a" style="left:242.85px;top:146.1px;" width="5.5" height="3" viewBox="0 0 5.5 3"><path d="M0 0H5.5L2.75 3Z" fill="#666"/></svg>
<div class="a " style="left:261px;top:138px;width:60px;height:20px;border:1px solid #a3a7ad;background:#fff;"></div>
<svg class="a" style="left:323.2px;top:140.3px;" width="15.47" height="16.38" viewBox="0 0 17 18"><path d="M0.300 2.200C0.300 0.300 16.700 0.300 16.700 2.200L10.200 10.500V14.500L7.200 17.500V10.500Z" fill="#4daf6b"/><ellipse cx="8.500" cy="2.300" rx="7" ry="1.300" fill="#3f9c5c"/></svg>
<div class="a " style="left:406.0px;top:130px;width:1px;height:610px;background:#858ca0;"></div>
<div class="a " style="left:453px;top:198px;width:0px;height:542px;border-left:1px dotted #aab7cc;"></div>
<div class="a " style="left:501.0px;top:207px;width:1px;height:533px;background:#8990a8;"></div>
<div class="a " style="left:548px;top:198px;width:0px;height:542px;border-left:1px dotted #aab7cc;"></div>
<div class="a " style="left:596.0px;top:207px;width:1px;height:533px;background:#8990a8;"></div>
<div class="a " style="left:643px;top:198px;width:0px;height:542px;border-left:1px dotted #aab7cc;"></div>
<div class="a " style="left:692.0px;top:207px;width:1px;height:533px;background:#8990a8;"></div>
<div class="a " style="left:738px;top:198px;width:0px;height:542px;border-left:1px dotted #aab7cc;"></div>
<div class="a " style="left:787.0px;top:207px;width:1px;height:533px;background:#8990a8;"></div>
<div class="a " style="left:834px;top:198px;width:0px;height:542px;border-left:1px dotted #aab7cc;"></div>
<div class="a " style="left:882.0px;top:207px;width:1px;height:533px;background:#8990a8;"></div>
<div class="a " style="left:929px;top:198px;width:0px;height:542px;border-left:1px dotted #aab7cc;"></div>
<div class="a " style="left:978.0px;top:207px;width:1px;height:533px;background:#8990a8;"></div>
<div class="a " style="left:1024px;top:198px;width:0px;height:542px;border-left:1px dotted #aab7cc;"></div>
<div class="a " style="left:1073.0px;top:207px;width:1px;height:533px;background:#8990a8;"></div>
<div class="a " style="left:1119px;top:198px;width:0px;height:542px;border-left:1px dotted #aab7cc;"></div>
<div class="a " style="left:1168.0px;top:207px;width:1px;height:533px;background:#8990a8;"></div>
<div class="a " style="left:1215px;top:198px;width:0px;height:542px;border-left:1px dotted #aab7cc;"></div>
<div class="a " style="left:1264px;top:214px;width:1px;height:526px;background:#8f96ad;"></div>
<div class="a " style="left:221px;top:249.0px;width:180px;height:1px;background:#d4d4d4;"></div>
<div class="a " style="left:407px;top:249.0px;width:857.5px;height:1px;background:#dcdce2;"></div>
<div class="a " style="left:221px;top:284.0px;width:180px;height:1px;background:#d4d4d4;"></div>
<div class="a " style="left:407px;top:284.0px;width:857.5px;height:1px;background:#dcdce2;"></div>
<div class="a " style="left:221px;top:319.0px;width:180px;height:1px;background:#d4d4d4;"></div>
<div class="a " style="left:407px;top:319.0px;width:857.5px;height:1px;background:#dcdce2;"></div>
<div class="a " style="left:221px;top:354.0px;width:180px;height:1px;background:#d4d4d4;"></div>
<div class="a " style="left:407px;top:354.0px;width:857.5px;height:1px;background:#dcdce2;"></div>
<div class="a " style="left:221px;top:389.0px;width:180px;height:1px;background:#d4d4d4;"></div>
<div class="a " style="left:407px;top:389.0px;width:857.5px;height:1px;background:#dcdce2;"></div>
<div class="a " style="left:221px;top:424.0px;width:180px;height:1px;background:#d4d4d4;"></div>
<div class="a " style="left:407px;top:424.0px;width:857.5px;height:1px;background:#dcdce2;"></div>
<div class="a " style="left:221px;top:459.0px;width:180px;height:1px;background:#d4d4d4;"></div>
<div class="a " style="left:407px;top:459.0px;width:857.5px;height:1px;background:#dcdce2;"></div>
<div class="a " style="left:221px;top:494.0px;width:180px;height:1px;background:#d4d4d4;"></div>
<div class="a " style="left:407px;top:494.0px;width:857.5px;height:1px;background:#dcdce2;"></div>
<div class="a " style="left:221px;top:529.0px;width:180px;height:1px;background:#d4d4d4;"></div>
<div class="a " style="left:407px;top:529.0px;width:857.5px;height:1px;background:#dcdce2;"></div>
<div class="a " style="left:221px;top:564.0px;width:180px;height:1px;background:#d4d4d4;"></div>
<div class="a " style="left:407px;top:564.0px;width:857.5px;height:1px;background:#dcdce2;"></div>
<div class="a " style="left:221px;top:599.0px;width:180px;height:1px;background:#d4d4d4;"></div>
<div class="a " style="left:407px;top:599.0px;width:857.5px;height:1px;background:#dcdce2;"></div>
<div class="a " style="left:221px;top:634.0px;width:180px;height:1px;background:#d4d4d4;"></div>
<div class="a " style="left:407px;top:634.0px;width:857.5px;height:1px;background:#dcdce2;"></div>
<div class="a " style="left:221px;top:669.0px;width:180px;height:1px;background:#d4d4d4;"></div>
<div class="a " style="left:407px;top:669.0px;width:857.5px;height:1px;background:#dcdce2;"></div>
<div class="a " style="left:221px;top:704.0px;width:180px;height:1px;background:#d4d4d4;"></div>
<div class="a " style="left:407px;top:704.0px;width:857.5px;height:1px;background:#dcdce2;"></div>
<div class="a " style="left:221px;top:739.0px;width:180px;height:1px;background:#d4d4d4;"></div>
<div class="a " style="left:407px;top:739.0px;width:857.5px;height:1px;background:#dcdce2;"></div>
<span class="t" id="t155" style="top:225.39px;font-size:11px;line-height:14px;color:#000;letter-spacing:0.163px;left:225.8px;">Jochen Irmer</span>
<span class="t" id="t156" style="top:260.39px;font-size:11px;line-height:14px;color:#000;letter-spacing:0.101px;left:225.8px;">Wolfgang Tiedt</span>
<span class="t" id="t157" style="top:295.39px;font-size:11px;line-height:14px;color:#000;letter-spacing:-0.137px;left:225.8px;">Thomas Dreckman</span>
<div class="a " style="left:221px;top:320.0px;width:184.5px;height:34px;background:linear-gradient(90deg,#4fb68c,#ffffff);"></div>
<span class="t" id="t158" style="top:330.39px;font-size:11px;line-height:14px;color:#000;letter-spacing:-0.047px;left:228.8px;">Lili Müller</span>
<div class="a " style="left:221px;top:355.0px;width:184.5px;height:34px;background:linear-gradient(90deg,#ffffe1,#fffff6);"></div>
<span class="t" id="t159" style="top:365.39px;font-size:11px;line-height:14px;color:#000;letter-spacing:-0.001px;left:225.8px;">Tina Friedman</span>
<div class="a " style="left:221px;top:390.0px;width:184.5px;height:34px;background:linear-gradient(90deg,#ffffe1,#fffff6);"></div>
<span class="t" id="t160" style="top:400.39px;font-size:11px;line-height:14px;color:#000;letter-spacing:0.119px;left:225.8px;">Waltraut Lüdemann</span>
<div class="a " style="left:221px;top:425.0px;width:184.5px;height:34px;background:linear-gradient(90deg,#9cc3ee,#eef4fb);"></div>
<span class="t" id="t161" style="top:435.39px;font-size:11px;line-height:14px;color:#000;letter-spacing:0.188px;left:225.8px;">Günter Rot</span>
<div class="a " style="left:221px;top:460.0px;width:184.5px;height:34px;background:linear-gradient(90deg,#9cc3ee,#eef4fb);"></div>
<span class="t" id="t162" style="top:470.39px;font-size:11px;line-height:14px;color:#000;letter-spacing:-0.092px;left:225.8px;">Paul Hücker</span>
<div class="a " style="left:221px;top:495.0px;width:184.5px;height:34px;background:linear-gradient(90deg,#9cc3ee,#eef4fb);"></div>
<span class="t" id="t163" style="top:505.39px;font-size:11px;line-height:14px;color:#000;letter-spacing:-0.129px;left:225.8px;">Nina Schmidt</span>
<div class="a " style="left:221px;top:530.0px;width:184.5px;height:34px;background:linear-gradient(90deg,#f0a285,#f9e0d6);"></div>
<span class="t" id="t164" style="top:540.39px;font-size:11px;line-height:14px;color:#000;letter-spacing:0.089px;left:225.8px;">Franz Pühl</span>
<div class="a " style="left:221px;top:565.0px;width:184.5px;height:34px;background:linear-gradient(90deg,#f0a285,#f9e0d6);"></div>
<span class="t" id="t165" style="top:575.39px;font-size:11px;line-height:14px;color:#000;letter-spacing:-0.003px;left:225.8px;">Gerd Maier</span>
<div class="a " style="left:221px;top:600.0px;width:184.5px;height:34px;background:linear-gradient(90deg,#f0a285,#f9e0d6);"></div>
<span class="t" id="t166" style="top:610.39px;font-size:11px;line-height:14px;color:#000;letter-spacing:0.085px;left:225.8px;">Krista Wollmark</span>
<div class="a " style="left:221px;top:635.0px;width:184.5px;height:34px;background:linear-gradient(90deg,#c9f3fd,#ecfdff);"></div>
<span class="t" id="t167" style="top:645.39px;font-size:11px;line-height:14px;color:#000;letter-spacing:-0.867px;left:225.8px;">Raum1</span>
<div class="a " style="left:221px;top:670.0px;width:184.5px;height:34px;background:linear-gradient(90deg,#c9f3fd,#ecfdff);"></div>
<span class="t" id="t168" style="top:680.39px;font-size:11px;line-height:14px;color:#000;letter-spacing:-0.617px;left:225.8px;">Raum2</span>
<div class="a " style="left:221px;top:705.0px;width:184.5px;height:34px;background:linear-gradient(90deg,#c9f3fd,#ecfdff);"></div>
<span class="t" id="t169" style="top:715.39px;font-size:11px;line-height:14px;color:#000;letter-spacing:-0.617px;left:225.8px;">Raum3</span>
<div class="a " style="left:406px;top:129.5px;width:860px;height:85.5px;background:#f7f7f7;border:1.3px solid #81838f;"></div>
<div class="a " style="left:406px;top:149.85px;width:860px;height:1.3px;background:#81838f;"></div>
<div class="a " style="left:406px;top:170.85px;width:860px;height:1.3px;background:#81838f;"></div>
<div class="a " style="left:406px;top:191.85px;width:860px;height:1.3px;background:#81838f;"></div>
<div class="a " style="left:220.5px;top:170.5px;width:186.5px;height:44.5px;background:linear-gradient(180deg,#fafafa,#efefef);border:1.5px solid #7c7c7c;"></div>
<span class="t" id="t170" style="top:185.49px;font-size:11px;line-height:14px;color:#000;letter-spacing:0.107px;left:333.3px;">Beschäftigung</span>
<svg class="a" style="left:410.0px;top:135.3px;" width="5" height="9" viewBox="0 0 5 9"><path d="M5 0V9L0 4.5Z" fill="#000"/></svg>
<svg class="a" style="left:1257.5px;top:135.3px;" width="5" height="9" viewBox="0 0 5 9"><path d="M0 0V9L5 4.5Z" fill="#000"/></svg>
<div class="t" style="top:133.09px;font-size:11px;line-height:14px;color:#000;letter-spacing:0.304px;left:535.65px;width:600px;text-align:center;"><span id="t171">Oktober 2024</span></div>
<svg class="a" style="left:410.0px;top:156.3px;" width="5" height="9" viewBox="0 0 5 9"><path d="M5 0V9L0 4.5Z" fill="#000"/></svg>
<svg class="a" style="left:1257.5px;top:156.3px;" width="5" height="9" viewBox="0 0 5 9"><path d="M0 0V9L5 4.5Z" fill="#000"/></svg>
<div class="t" style="top:154.09px;font-size:11px;line-height:14px;color:#000;letter-spacing:-0.190px;left:535.40px;width:600px;text-align:center;"><span id="t172">Woche 43</span></div>
<svg class="a" style="left:410.0px;top:177.3px;" width="5" height="9" viewBox="0 0 5 9"><path d="M5 0V9L0 4.5Z" fill="#000"/></svg>
<svg class="a" style="left:1257.5px;top:177.3px;" width="5" height="9" viewBox="0 0 5 9"><path d="M0 0V9L5 4.5Z" fill="#000"/></svg>
<div class="t" style="top:175.09px;font-size:11px;line-height:14px;color:#000;letter-spacing:0.039px;left:535.52px;width:600px;text-align:center;"><span id="t173">Montag 21</span></div>
<span class="t" id="t174" style="top:195.29px;font-size:10.7px;line-height:14px;color:#000;letter-spacing:0.428px;left:407.7px;">09h</span>
<div class="t" style="top:195.29px;font-size:10.7px;line-height:14px;color:#000;letter-spacing:0.178px;left:201.59px;width:600px;text-align:center;"><span id="t175">10h</span></div>
<div class="t" style="top:195.29px;font-size:10.7px;line-height:14px;color:#000;letter-spacing:0.577px;left:296.79px;width:600px;text-align:center;"><span id="t176">11h</span></div>
<div class="t" style="top:195.29px;font-size:10.7px;line-height:14px;color:#000;letter-spacing:0.178px;left:392.59px;width:600px;text-align:center;"><span id="t177">12h</span></div>
<div class="t" style="top:195.29px;font-size:10.7px;line-height:14px;color:#000;letter-spacing:0.178px;left:487.59px;width:600px;text-align:center;"><span id="t178">13h</span></div>
<div class="t" style="top:195.29px;font-size:10.7px;line-height:14px;color:#000;letter-spacing:0.178px;left:582.59px;width:600px;text-align:center;"><span id="t179">14h</span></div>
<div class="t" style="top:195.29px;font-size:10.7px;line-height:14px;color:#000;letter-spacing:0.178px;left:678.59px;width:600px;text-align:center;"><span id="t180">15h</span></div>
<div class="t" style="top:195.29px;font-size:10.7px;line-height:14px;color:#000;letter-spacing:0.178px;left:773.59px;width:600px;text-align:center;"><span id="t181">16h</span></div>
<div class="t" style="top:195.29px;font-size:10.7px;line-height:14px;color:#000;letter-spacing:0.178px;left:868.59px;width:600px;text-align:center;"><span id="t182">17h</span></div>
<span class="t" id="t183" style="top:195.29px;font-size:10.7px;line-height:14px;color:#000;letter-spacing:0.328px;right:31.67px;">18h</span>
<div class="a " style="left:453px;top:198px;width:0px;height:16px;border-left:1px dotted #b3c0d3;"></div>
<div class="a " style="left:429px;top:203.5px;width:0px;height:10.5px;border-left:1px dotted #b3c0d3;"></div>
<div class="a " style="left:477px;top:203.5px;width:0px;height:10.5px;border-left:1px dotted #b3c0d3;"></div>
<div class="a " style="left:548px;top:198px;width:0px;height:16px;border-left:1px dotted #b3c0d3;"></div>
<div class="a " style="left:524px;top:203.5px;width:0px;height:10.5px;border-left:1px dotted #b3c0d3;"></div>
<div class="a " style="left:572px;top:203.5px;width:0px;height:10.5px;border-left:1px dotted #b3c0d3;"></div>
<div class="a " style="left:643px;top:198px;width:0px;height:16px;border-left:1px dotted #b3c0d3;"></div>
<div class="a " style="left:619px;top:203.5px;width:0px;height:10.5px;border-left:1px dotted #b3c0d3;"></div>
<div class="a " style="left:667px;top:203.5px;width:0px;height:10.5px;border-left:1px dotted #b3c0d3;"></div>
<div class="a " style="left:738px;top:198px;width:0px;height:16px;border-left:1px dotted #b3c0d3;"></div>
<div class="a " style="left:715px;top:203.5px;width:0px;height:10.5px;border-left:1px dotted #b3c0d3;"></div>
<div class="a " style="left:762px;top:203.5px;width:0px;height:10.5px;border-left:1px dotted #b3c0d3;"></div>
<div class="a " style="left:834px;top:198px;width:0px;height:16px;border-left:1px dotted #b3c0d3;"></div>
<div class="a " style="left:810px;top:203.5px;width:0px;height:10.5px;border-left:1px dotted #b3c0d3;"></div>
<div class="a " style="left:858px;top:203.5px;width:0px;height:10.5px;border-left:1px dotted #b3c0d3;"></div>
<div class="a " style="left:929px;top:198px;width:0px;height:16px;border-left:1px dotted #b3c0d3;"></div>
<div class="a " style="left:905px;top:203.5px;width:0px;height:10.5px;border-left:1px dotted #b3c0d3;"></div>
<div class="a " style="left:953px;top:203.5px;width:0px;height:10.5px;border-left:1px dotted #b3c0d3;"></div>
<div class="a " style="left:1024px;top:198px;width:0px;height:16px;border-left:1px dotted #b3c0d3;"></div>
<div class="a " style="left:1000px;top:203.5px;width:0px;height:10.5px;border-left:1px dotted #b3c0d3;"></div>
<div class="a " style="left:1048px;top:203.5px;width:0px;height:10.5px;border-left:1px dotted #b3c0d3;"></div>
<div class="a " style="left:1119px;top:198px;width:0px;height:16px;border-left:1px dotted #b3c0d3;"></div>
<div class="a " style="left:1096px;top:203.5px;width:0px;height:10.5px;border-left:1px dotted #b3c0d3;"></div>
<div class="a " style="left:1143px;top:203.5px;width:0px;height:10.5px;border-left:1px dotted #b3c0d3;"></div>
<div class="a " style="left:1215px;top:198px;width:0px;height:16px;border-left:1px dotted #b3c0d3;"></div>
<div class="a " style="left:1191px;top:203.5px;width:0px;height:10.5px;border-left:1px dotted #b3c0d3;"></div>
<div class="a " style="left:1239px;top:203.5px;width:0px;height:10.5px;border-left:1px dotted #b3c0d3;"></div>
<div class="a " style="left:501.0px;top:207px;width:1px;height:8px;background:#8990a8;"></div>
<div class="a " style="left:596.0px;top:207px;width:1px;height:8px;background:#8990a8;"></div>
<div class="a " style="left:692.0px;top:207px;width:1px;height:8px;background:#8990a8;"></div>
<div class="a " style="left:787.0px;top:207px;width:1px;height:8px;background:#8990a8;"></div>
<div class="a " style="left:882.0px;top:207px;width:1px;height:8px;background:#8990a8;"></div>
<div class="a " style="left:978.0px;top:207px;width:1px;height:8px;background:#8990a8;"></div>
<div class="a " style="left:1073.0px;top:207px;width:1px;height:8px;background:#8990a8;"></div>
<div class="a " style="left:1168.0px;top:207px;width:1px;height:8px;background:#8990a8;"></div>
<div class="a " style="left:406.5px;top:250.0px;width:857.5px;height:34px;background:#f6f4c4;"></div>
<div class="a " style="left:406.5px;top:251.0px;width:857.5px;height:32px;border:1.2px solid #8c8a2a;background:#f7f6cf;"></div>
<div class="a " style="left:408.7px;top:253.2px;width:853.1px;height:27.6px;background:linear-gradient(90deg,#c9c832,#e0df86);"></div>
<div class="a " style="left:408.9px;top:253.2px;width:4.2px;height:27.6px;background:#f6c08c;"></div>
<span class="t" id="t184" style="top:253.39px;font-size:11px;line-height:14px;color:#ffffe8;letter-spacing:0.618px;left:414.8px;">Ausbildung</span>
<div class="a " style="left:1254.5px;top:278.5px;width:2.2px;height:2.2px;background:#111;"></div>
<div class="a " style="left:1258.5px;top:278.5px;width:2.2px;height:2.2px;background:#111;"></div>
<div class="a " style="left:788px;top:285.0px;width:380.29999999999995px;height:34px;background:#e4eefb;"></div>
<div class="a " style="left:788px;top:286.0px;width:380.29999999999995px;height:32px;border:1.2px solid #1f4f98;background:#e8f2ff;"></div>
<div class="a " style="left:790.2px;top:288.2px;width:375.9px;height:27.6px;background:linear-gradient(90deg,#3a8aeb,#84b4f0);"></div>
<div class="a " style="left:790.4px;top:288.2px;width:4.2px;height:27.6px;background:#3460fa;"></div>
<span class="t" id="t185" style="top:288.39px;font-size:11px;line-height:14px;color:#fff;letter-spacing:0.502px;left:796.3px;">Noteinsatz</span>
<div class="a " style="left:406.5px;top:320.0px;width:857.5px;height:34px;background:#f8e6cc;"></div>
<div class="a " style="left:406.5px;top:321.0px;width:857.5px;height:32px;border:1.2px solid #9a6a35;background:#fbf0c8;"></div>
<div class="a " style="left:408.7px;top:323.2px;width:853.1px;height:27.6px;background:linear-gradient(90deg,#e7a652,#f1c896);"></div>
<div class="a " style="left:408.9px;top:323.2px;width:4.2px;height:27.6px;background:#ffff10;"></div>
<span class="t" id="t186" style="top:323.39px;font-size:11px;line-height:14px;color:#ffffe8;letter-spacing:0.531px;left:414.8px;">Montage</span>
<div class="a " style="left:1254.5px;top:348.5px;width:2.2px;height:2.2px;background:#111;"></div>
<div class="a " style="left:1258.5px;top:348.5px;width:2.2px;height:2.2px;background:#111;"></div>
<div class="a " style="left:406.5px;top:425.0px;width:857.5px;height:34px;background:#ececec;"></div>
<div class="a " style="left:406.5px;top:426.0px;width:857.5px;height:32px;border:1.2px solid #74747c;background:#f2f2f2;"></div>
<div class="a " style="left:408.7px;top:428.2px;width:853.1px;height:27.6px;background:linear-gradient(90deg,#a6a6a4,#c9c9c8);"></div>
<div class="a " style="left:408.9px;top:428.2px;width:4.2px;height:27.6px;background:#3c5fe0;"></div>
<span class="t" id="t187" style="top:428.39px;font-size:11px;line-height:14px;color:#fff;letter-spacing:0.618px;left:414.8px;">Ausbildung</span>
<div class="a " style="left:1254.5px;top:453.5px;width:2.2px;height:2.2px;background:#111;"></div>
<div class="a " style="left:1258.5px;top:453.5px;width:2.2px;height:2.2px;background:#111;"></div>
<div class="a " style="left:406.5px;top:460.0px;width:857.5px;height:34px;background:#f2f2cc;"></div>
<div class="a " style="left:406.5px;top:461.0px;width:857.5px;height:32px;border:1.2px solid #7c7c0c;background:#c9c95c;"></div>
<div class="a " style="left:407.7px;top:462.2px;width:855.1px;height:29.6px;background:linear-gradient(90deg,#b3b234,#d3d388);"></div>
<div class="a " style="left:407.7px;top:462.2px;width:855.1px;height:29.6px;background:repeating-linear-gradient(135deg,rgba(255,255,235,.42) 0,rgba(255,255,235,.42) 0.800px,transparent 0.800px,transparent 5.660px);"></div>
<div class="a " style="left:408.0px;top:462.0px;width:854.5px;height:30px;background:repeating-linear-gradient(90deg,#f4f4c0 0,#f4f4c0 5px,transparent 5px,transparent 6.500px) top/100% 1px no-repeat,repeating-linear-gradient(90deg,#f4f4c0 0,#f4f4c0 5px,transparent 5px,transparent 6.500px) bottom/100% 1px no-repeat,repeating-linear-gradient(180deg,#f4f4c0 0,#f4f4c0 5px,transparent 5px,transparent 6.500px) left/1px 100% no-repeat,repeating-linear-gradient(180deg,#f4f4c0 0,#f4f4c0 5px,transparent 5px,transparent 6.500px) right/1px 100% no-repeat;"></div>
<div class="t" style="top:469.69px;font-size:11px;line-height:14px;color:#ffffdc;letter-spacing:0.438px;left:537.72px;width:600px;text-align:center;"><span id="t188">Krank</span></div>
<div class="a " style="left:406.5px;top:495.0px;width:857.5px;height:34px;background:#f8e6cc;"></div>
<div class="a " style="left:406.5px;top:496.0px;width:857.5px;height:32px;border:1.2px solid #a87838;background:#fbf0c8;"></div>
<div class="a " style="left:408.7px;top:498.2px;width:853.1px;height:27.6px;background:linear-gradient(90deg,#e7a652,#f1c896);"></div>
<div class="a " style="left:408.9px;top:498.2px;width:4.2px;height:27.6px;background:#ffff10;"></div>
<span class="t" id="t189" style="top:498.39px;font-size:11px;line-height:14px;color:#ffffe8;letter-spacing:0.618px;left:414.8px;">Ausbildung</span>
<div class="a " style="left:1254.5px;top:523.5px;width:2.2px;height:2.2px;background:#111;"></div>
<div class="a " style="left:1258.5px;top:523.5px;width:2.2px;height:2.2px;background:#111;"></div>
<div class="a " style="left:406.5px;top:530.0px;width:857.5px;height:34px;background:#f4f4f4;"></div>
<div class="a " style="left:406.5px;top:531.0px;width:857.5px;height:32px;border:1.2px solid #cfcfcf;background:#fff;"></div>
<div class="a " style="left:407.7px;top:532.2px;width:855.1px;height:29.6px;background:linear-gradient(90deg,#ffffff,#ffffff);"></div>
<div class="a " style="left:407.7px;top:532.2px;width:855.1px;height:29.6px;background:repeating-linear-gradient(135deg,rgba(140,140,140,.45) 0,rgba(140,140,140,.45) 0.800px,transparent 0.800px,transparent 5.660px);"></div>
<div class="t" style="top:539.69px;font-size:11px;line-height:14px;color:#000;letter-spacing:0.029px;left:530.51px;width:600px;text-align:center;"><span id="t190">Auf Abruf</span></div>
<div class="a " style="left:1254.5px;top:558.5px;width:2.2px;height:2.2px;background:#111;"></div>
<div class="a " style="left:1258.5px;top:558.5px;width:2.2px;height:2.2px;background:#111;"></div>
<svg class="a" style="left:1244.5px;top:534.5px;" width="14" height="13" viewBox="0 0 14 13"><path d="M2.600 5.600A4.600 4.600 0 0 1 11 4.300M11.400 7.400A4.600 4.600 0 0 1 3 8.700" stroke="#111" stroke-width="1.100" fill="none"/><path d="M0.300 4.800H4.700L2.500 8Z" fill="#111"/><path d="M9.300 8.200H13.700L11.500 5Z" fill="#111"/></svg>
<div class="a " style="left:221px;top:740px;width:185px;height:25.5px;background:linear-gradient(90deg,#1ee81e,#30f030 35%,#c4fdc0);"></div>
<span class="t" id="t191" style="top:745.19px;font-size:11px;line-height:14px;color:#000;letter-spacing:0.190px;left:230.5px;">Beschäftigung</span>
<div class="a " style="left:406px;top:739.5px;width:860px;height:26.5px;border:1.5px solid #3bb23b;background:#fff;"></div>
<div class="t" style="top:745.19px;font-size:11px;line-height:14px;color:#000;letter-spacing:-0.900px;left:535.05px;width:600px;text-align:center;"><span id="t192">0%</span></div>
<div class="a " style="left:1268.5px;top:125px;width:17.5px;height:650px;background:#f0f0f0;"></div>
<div class="a " style="left:1269px;top:142px;width:16.5px;height:152px;background:#cdcdcd;"></div>
<svg class="a" style="left:1273px;top:131px;" width="9" height="7" viewBox="0 0 9 7"><path d="M0.800 5.400L4.500 1.700 8.200 5.400" stroke="#5a5a5a" stroke-width="1.800" fill="none"/></svg>
<svg class="a" style="left:1273px;top:763px;" width="9" height="7" viewBox="0 0 9 7"><path d="M0.800 1.600L4.500 5.300 8.200 1.600" stroke="#484848" stroke-width="2" fill="none"/></svg>
</body></html>
